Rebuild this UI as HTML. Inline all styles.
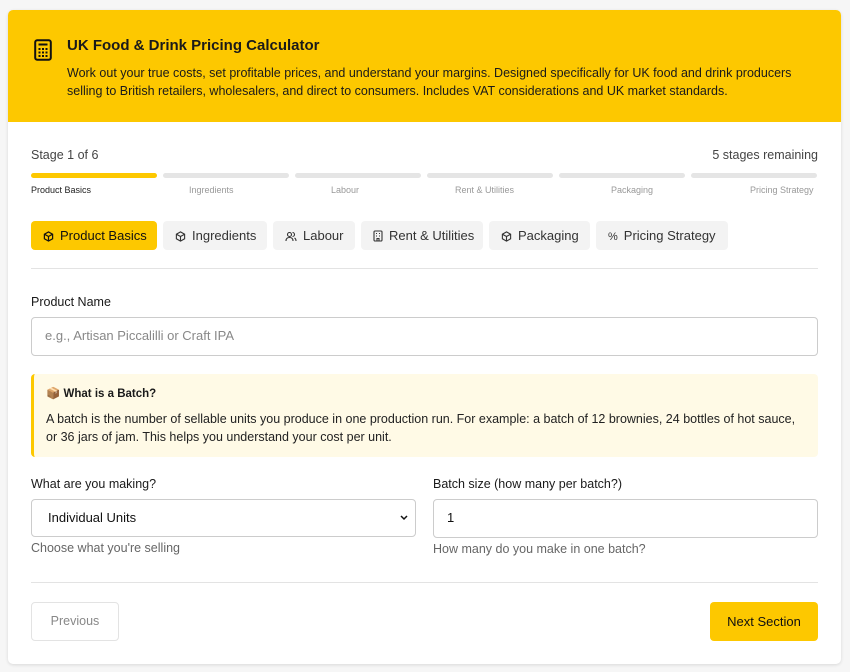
<!DOCTYPE html>
<html><head><meta charset="utf-8"><style>
*{box-sizing:border-box;margin:0;padding:0}
body{width:850px;height:672px;background:#f6f6f6;font-family:"Liberation Sans",sans-serif;color:#1a1a1a;position:relative;overflow:hidden}
.card{position:absolute;left:8px;top:10px;width:833px;height:654px;background:#fff;border-radius:5px;box-shadow:0 1px 3px rgba(0,0,0,.12);overflow:hidden}
.hdr{height:112px;background:#fdc800;position:relative}
.hdr h1{position:absolute;left:59px;top:27px;font-size:15px;font-weight:bold}
.hdr p{position:absolute;left:59px;top:54px;width:760px;font-size:12.5px;line-height:18px}
.ico{position:absolute;left:26px;top:29px}
.abs{position:absolute}
.bar{position:absolute;top:173px;height:5px;width:126px;border-radius:3px;background:#e5e5e5}
.lbl{position:absolute;top:185px;font-size:9px;color:#999}
.tab{position:absolute;top:221px;height:29px;background:#f3f3f3;border-radius:4px;font-size:13px;line-height:29px;padding-left:12px;color:#333}
.tab svg{vertical-align:-2px;margin-right:6px}
.in{position:absolute;border:1.5px solid #ccc;border-radius:4px;background:#fff;font-size:13px}
</style></head><body>
<div class="card">
<div class="hdr">
<svg class="ico" width="18" height="22" viewBox="0 0 18 22"><rect x="1.2" y="1.2" width="15.6" height="19.6" rx="2" fill="none" stroke="#111" stroke-width="2"/><rect x="4.5" y="4.5" width="9" height="2" fill="#111"/><g fill="#111"><rect x="4.5" y="9" width="2" height="2"/><rect x="8" y="9" width="2" height="2"/><rect x="11.5" y="9" width="2" height="2"/><rect x="4.5" y="12.5" width="2" height="2"/><rect x="8" y="12.5" width="2" height="2"/><rect x="11.5" y="12.5" width="2" height="2"/><rect x="4.5" y="16" width="2" height="2"/><rect x="8" y="16" width="2" height="2"/><rect x="11.5" y="16" width="2" height="2"/></g></svg>
<h1>UK Food &amp; Drink Pricing Calculator</h1>
<p>Work out your true costs, set profitable prices, and understand your margins. Designed specifically for UK food and drink producers selling to British retailers, wholesalers, and direct to consumers. Includes VAT considerations and UK market standards.</p>
</div>
</div>
<div class="abs" style="left:31px;top:148px;font-size:12.5px;color:#444">Stage 1 of 6</div>
<div class="abs" style="right:32px;top:148px;font-size:12.5px;color:#444">5 stages remaining</div>
<div class="bar" style="left:31px;background:#fdc800"></div>
<div class="bar" style="left:163px"></div>
<div class="bar" style="left:295px"></div>
<div class="bar" style="left:427px"></div>
<div class="bar" style="left:559px"></div>
<div class="bar" style="left:691px"></div>
<div class="lbl" style="left:31px;color:#222">Product Basics</div>
<div class="lbl" style="left:189px">Ingredients</div>
<div class="lbl" style="left:331px">Labour</div>
<div class="lbl" style="left:455px">Rent &amp; Utilities</div>
<div class="lbl" style="left:611px">Packaging</div>
<div class="lbl" style="left:750px">Pricing Strategy</div>
<div class="tab" style="left:31px;width:126px;background:#fdc800;color:#111"><svg width="11" height="11" viewBox="0 0 12 12" fill="none" stroke="#111" stroke-width="1.3"><path d="M6 1l4.5 2.5v5L6 11 1.5 8.5v-5zM1.5 3.5L6 6l4.5-2.5M6 6v5"/></svg>Product Basics</div>
<div class="tab" style="left:163px;width:104px"><svg width="11" height="11" viewBox="0 0 12 12" fill="none" stroke="#333" stroke-width="1.2"><path d="M6 1l4.5 2.5v5L6 11 1.5 8.5v-5zM1.5 3.5L6 6l4.5-2.5M6 6v5"/></svg>Ingredients</div>
<div class="tab" style="left:273px;width:82px"><svg width="12" height="11" viewBox="0 0 12 11" fill="none" stroke="#333" stroke-width="1.1"><circle cx="4.5" cy="3.5" r="2"/><path d="M1 10c0-2.5 1.5-3.5 3.5-3.5S8 7.5 8 10M7.5 1.5a2 2 0 010 4M9.5 7c1 .5 1.5 1.5 1.5 3"/></svg>Labour</div>
<div class="tab" style="left:361px;width:122px"><svg width="10" height="12" viewBox="0 0 10 12" fill="none" stroke="#333" stroke-width="1.1"><rect x="1" y="1" width="8" height="10" rx="1"/><path d="M3 3.5h1M6 3.5h1M3 6h1M6 6h1M4 11V8.5h2V11"/></svg>Rent &amp; Utilities</div>
<div class="tab" style="left:489px;width:101px"><svg width="11" height="11" viewBox="0 0 12 12" fill="none" stroke="#333" stroke-width="1.2"><path d="M6 1l4.5 2.5v5L6 11 1.5 8.5v-5zM1.5 3.5L6 6l4.5-2.5M6 6v5"/></svg>Packaging</div>
<div class="tab" style="left:596px;width:132px"><span style="margin-right:6px;font-size:11px">%</span>Pricing Strategy</div>
<div class="abs" style="left:31px;top:268px;width:787px;height:1px;background:#e3e3e3"></div>
<div class="abs" style="left:31px;top:295px;font-size:12.5px">Product Name</div>
<div class="in" style="left:31px;top:317px;width:787px;height:39px;line-height:36px;padding-left:13px;color:#888">e.g., Artisan Piccalilli or Craft IPA</div>
<div class="abs" style="left:31px;top:374px;width:787px;height:83px;background:#fffae6;border-left:3px solid #fdc800;border-radius:4px"></div>
<div class="abs" style="left:46px;top:386px;font-size:11.5px;font-weight:bold">📦 What is a Batch?</div>
<div class="abs" style="left:46px;top:410px;width:760px;font-size:12.5px;line-height:18px;color:#222">A batch is the number of sellable units you produce in one production run. For example: a batch of 12 brownies, 24 bottles of hot sauce, or 36 jars of jam. This helps you understand your cost per unit.</div>
<div class="abs" style="left:31px;top:477px;font-size:12.5px">What are you making?</div>
<div class="in" style="left:31px;top:499px;width:385px;height:38px;line-height:35px;padding-left:16px;color:#111">Individual Units<svg style="position:absolute;right:7px;top:15px" width="8" height="6" viewBox="0 0 8 6"><path d="M1 1l3 3 3-3" fill="none" stroke="#111" stroke-width="1.5"/></svg></div>
<div class="abs" style="left:31px;top:541px;font-size:12.5px;color:#666">Choose what you're selling</div>
<div class="abs" style="left:433px;top:477px;font-size:12.5px">Batch size (how many per batch?)</div>
<div class="in" style="left:433px;top:499px;width:385px;height:39px;line-height:36px;padding-left:13px;color:#111">1</div>
<div class="abs" style="left:433px;top:542px;font-size:12.5px;color:#666">How many do you make in one batch?</div>
<div class="abs" style="left:31px;top:582px;width:787px;height:1px;background:#e3e3e3"></div>
<div class="abs" style="left:31px;top:602px;width:88px;height:39px;border:1.5px solid #e3e3e3;border-radius:4px;font-size:12.5px;line-height:36px;text-align:center;color:#888">Previous</div>
<div class="abs" style="left:710px;top:602px;width:108px;height:39px;background:#fdc800;border-radius:4px;font-size:13px;line-height:39px;text-align:center;color:#111">Next Section</div>
</body></html>
